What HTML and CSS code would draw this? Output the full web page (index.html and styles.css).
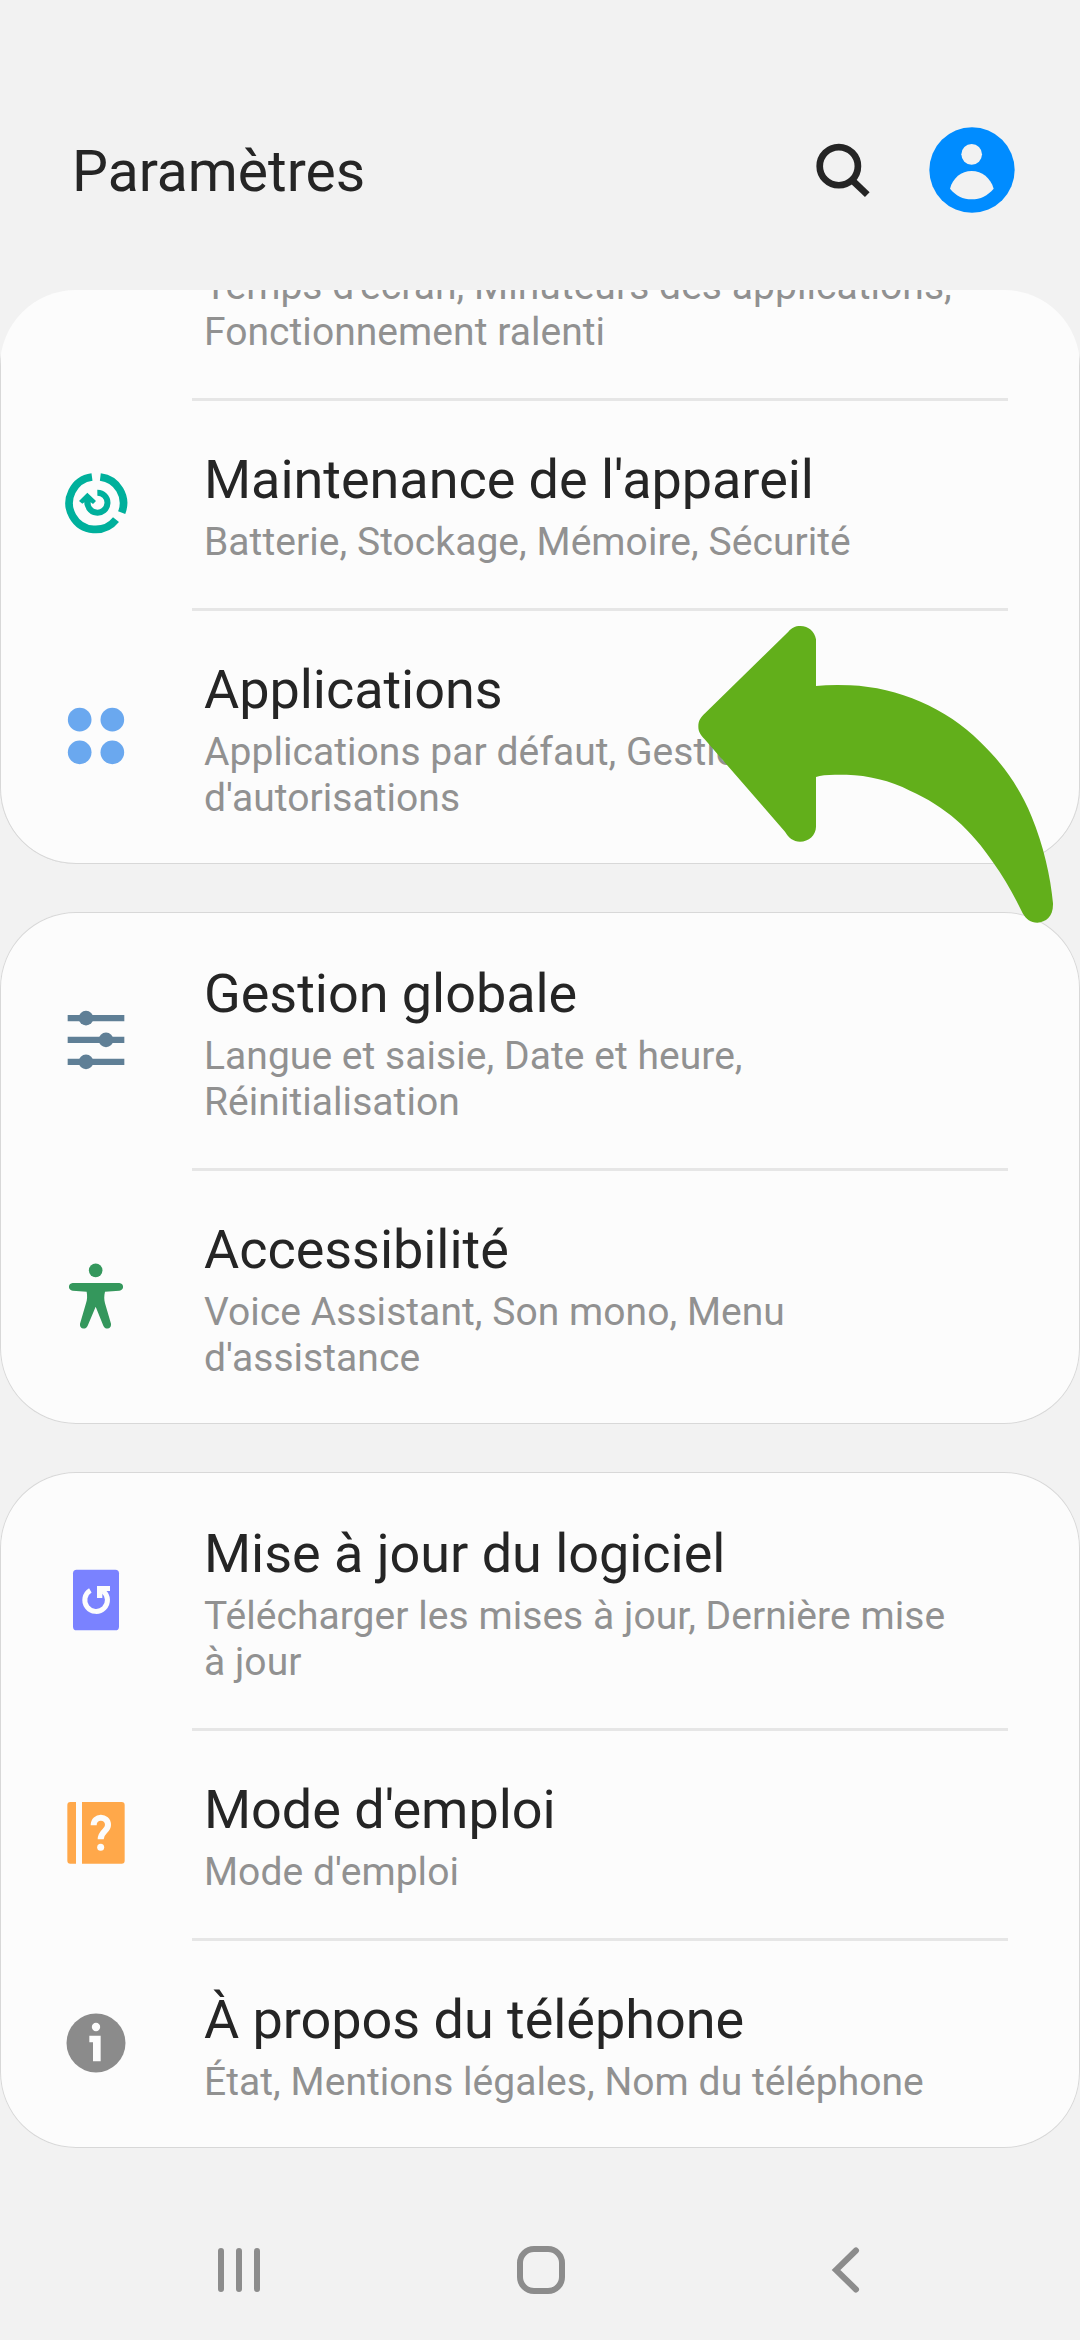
FILE: index.html
```html
<!DOCTYPE html>
<html lang="fr">
<head>
<meta charset="utf-8">
<title>Paramètres</title>
<link rel="stylesheet" href="styles.css">
</head>
<body>
<header class="header">
  <h1 class="header-title">Paramètres</h1>
  <svg class="search" viewBox="150 110 200 200"><circle cx="236" cy="197" r="57" fill="none" stroke="#252525" stroke-width="20"/><path d="M276 239L321 282" stroke="#252525" stroke-width="20"/></svg>
  <svg class="avatar" viewBox="508 81 258 258"><circle cx="637" cy="210" r="128" fill="#008cff"/><circle cx="636" cy="163" r="31" fill="#f2f2f2"/><path d="M571 266C579 234 605 213 636 213S693 234 702 266C684 287 662 298 636 298S588 287 571 266Z" fill="#f2f2f2"/></svg>
</header>

<main class="list">
  <section class="card card-scrolled">
    <div class="row row-cut">
      <div class="text"><p class="sub">Temps d'écran, Minuteurs des applications,<br>Fonctionnement ralenti</p></div>
    </div>
    <div class="row">
      <svg class="icon" viewBox="48 39 240 240"><g fill="none" stroke="#00b09c"><path stroke-width="23" d="M156 81A79 79 0 1 0 228 209M181 81A79 79 0 0 1 245 188"/><path stroke-width="18" d="M172 128A30 30 0 1 1 143 152"/></g><path fill="#00b09c" d="M142 128L168 153L159 162L151 156L151 166H134V156L127 161L117 153Z"/></svg>
      <div class="text"><h2 class="title">Maintenance de l'appareil</h2><p class="sub">Batterie, Stockage, Mémoire, Sécurité</p></div>
    </div>
    <div class="row">
      <svg class="icon" viewBox="48 48 240 240" fill="#6aa8ef"><circle cx="119" cy="119" r="35.5"/><circle cx="217" cy="119" r="35.5"/><circle cx="119" cy="217" r="35.5"/><circle cx="217" cy="217" r="35.5"/></svg>
      <div class="text"><h2 class="title">Applications</h2><p class="sub">Applications par défaut, Gestionnaire<br>d'autorisations</p></div>
    </div>
  </section>

  <section class="card">
    <div class="row">
      <svg class="icon" viewBox="48 30 240 240" fill="#5f7f96"><path d="M83 75H253V94H83ZM83 140H253V159H83ZM83 206H253V225H83Z"/><circle cx="138" cy="84.500" r="22"/><circle cx="198" cy="149.500" r="22"/><circle cx="138" cy="215.500" r="22"/></svg>
      <div class="text"><h2 class="title">Gestion globale</h2><p class="sub">Langue et saisie, Date et heure,<br>Réinitialisation</p></div>
    </div>
    <div class="row">
      <svg class="icon" viewBox="48 48 240 240" fill="#34975c"><circle cx="167" cy="91" r="20.500"/><path d="M98 129H238C253 130 253 151 238 152L195 155C192 168 192 178 195 190L213 251C215 267 196 271 190 257L167 200L143 257C137 271 118 267 120 251L138 190C142 178 142 168 140 155L98 152C83 151 83 130 98 129Z"/></svg>
      <div class="text"><h2 class="title">Accessibilité</h2><p class="sub">Voice Assistant, Son mono, Menu<br>d'assistance</p></div>
    </div>
  </section>

  <section class="card">
    <div class="row">
      <svg class="icon" viewBox="48 30 240 240"><rect x="99" y="59" width="138" height="182" rx="11" fill="#7a82ff"/><path d="M151 121A34 34 0 1 0 190 124" fill="none" stroke="#fcfcfc" stroke-width="15"/><path d="M171 108H210V123H200L187 129V144H171Z" fill="#fcfcfc"/></svg>
      <div class="text"><h2 class="title">Mise à jour du logiciel</h2><p class="sub">Télécharger les mises à jour, Dernière mise<br>à jour</p></div>
    </div>
    <div class="row">
      <svg class="icon" viewBox="48 39 240 240"><path d="M108 66V251H91Q82 251 82 242V75Q82 66 91 66ZM126 66H245Q254 66 254 75V242Q254 251 245 251H126Z" fill="#ffa84a"/><path d="M161 136C161 106 204 106 204 135C204 154 182 153 182 178" fill="none" stroke="#fcfcfc" stroke-width="18"/><circle cx="182" cy="202" r="10.500" fill="#fcfcfc"/></svg>
      <div class="text"><h2 class="title">Mode d'emploi</h2><p class="sub">Mode d'emploi</p></div>
    </div>
    <div class="row">
      <svg class="icon" viewBox="48 669 240 240"><circle cx="168" cy="789" r="88.500" fill="#8b8b8b"/><circle cx="168" cy="741" r="12.500" fill="#fcfcfc"/><path d="M148 767H182V844H159V787H148Z" fill="#fcfcfc"/></svg>
      <div class="text"><h2 class="title">À propos du téléphone</h2><p class="sub">État, Mentions légales, Nom du téléphone</p></div>
    </div>
  </section>
</main>

<nav class="nav">
  <svg class="nav-icon" viewBox="0 0 60 60"><path d="M12 11V49M30 11V49M48 11V49"/></svg>
  <svg class="nav-icon" viewBox="0 0 60 60"><rect x="9" y="9" width="42" height="42" rx="14"/></svg>
  <svg class="nav-icon" viewBox="0 0 60 60"><path d="M44 10.500L24 30L44 49.500"/></svg>
</nav>

<svg class="arrow" viewBox="0 0 1260 1020"><path fill="#62af1b" d="M468 258V118C464 95 446 78 421 78C405 78 395 84 385 95L135 340C122 352 115 362 115 380C115 395 122 405 134 418L375 695C385 712 400 725 420 725C446 725 468 705 468 680V531Q488 524 525 524H560C625 526 690 541 750 572C855 618 935 690 1000 788Q1045 850 1088 940C1098 958 1112 968 1132 968C1158 966 1180 950 1179 910C1172 830 1150 735 1115 650C1080 565 1030 492 960 425C860 325 715 262 570 256Q510 254 468 258Z"/></svg>
</body>
</html>
```
FILE: styles.css
```css
* { box-sizing: border-box; margin: 0; padding: 0; }

body {
  position: relative;
  display: flex;
  flex-direction: column;
  width: 1080px;
  height: 2340px;
  overflow: hidden;
  background: #f2f2f2;
  color: #252525;
  font-family: Roboto, sans-serif;
}

svg { display: block; flex: none; }

.header {
  display: flex;
  align-items: center;
  height: 290px;
  padding: 50px 65px 0 72px;
}
.header-title {
  flex: 1;
  padding-top: 4px;
  font-size: 57px;
  font-weight: 400;
  line-height: 68px;
}
.search { width: 67px; height: 67px; margin-right: 52px; }
.avatar { width: 86px; height: 86px; }

/* Scrolling area, rounded where it meets the header */
.list {
  display: flex;
  flex-direction: column;
  gap: 48px;
  border-radius: 76px 76px 0 0;
  overflow: hidden;
}

.card {
  border-radius: 76px;
  background: #fcfcfc;
  box-shadow: inset 0 0 0 1px #d8d8d8;
}
.card-scrolled {
  border-radius: 0 0 76px 76px;
  box-shadow: inset 1px 0 #d8d8d8, inset -1px 0 #d8d8d8, inset 0 -1px #d8d8d8;
}

.row {
  display: grid;
  grid-template-columns: 204px 1fr;
  align-items: center;
}
.row + .row {
  background: linear-gradient(#e6e6e6, #e6e6e6) 192px 0 / 816px 3px no-repeat;
}
.row-cut {
  height: 108px;
  align-content: end;
  overflow: hidden;
}

.icon { width: 80px; height: 80px; margin-left: 56px; }
.text { grid-column: 2; padding: 50px 0 43px; }
.row-cut .text { padding-top: 0; }
.title {
  margin-bottom: 7px;
  font-size: 54px;
  font-weight: 400;
  line-height: 64px;
  letter-spacing: -0.04px;
}
.sub {
  color: #919191;
  font-size: 39px;
  line-height: 46px;
  letter-spacing: 0.05px;
  white-space: nowrap;
}

.nav {
  display: flex;
  flex: 1;
  justify-content: space-between;
  padding: 92px 208px 0 209px;
}
.nav-icon {
  width: 60px;
  height: 60px;
  fill: none;
  stroke: #8c8c8c;
  stroke-width: 6;
  stroke-linecap: round;
}

.arrow {
  position: absolute;
  left: 660px;
  top: 600px;
  width: 420px;
  height: 340px;
}
```
